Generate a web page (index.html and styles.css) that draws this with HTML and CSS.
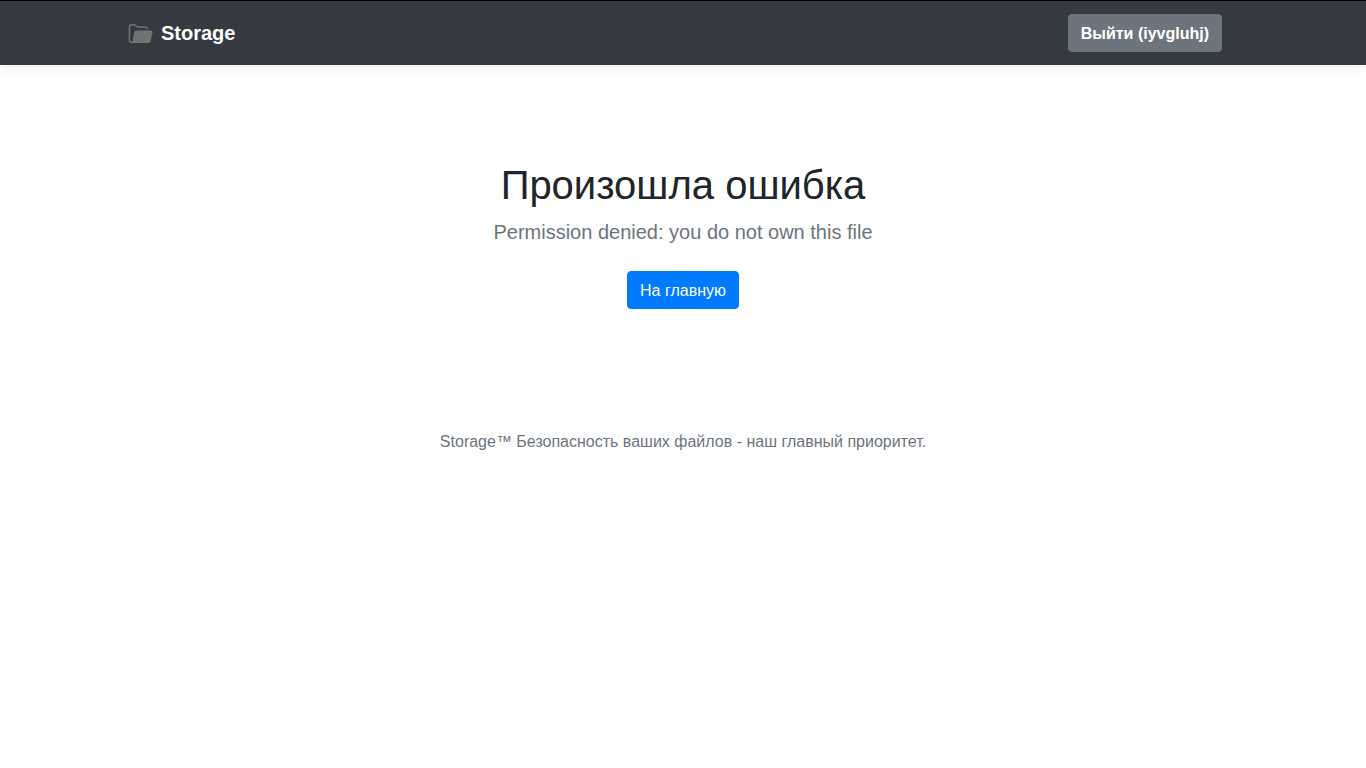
FILE: index.html
```html
<!DOCTYPE html>
<html lang="ru">
<head>
<meta charset="utf-8">
<meta name="viewport" content="width=device-width, initial-scale=1">
<title>Storage</title>
<link rel="stylesheet" href="styles.css">
</head>
<body>
<header class="navbar">
  <div class="container navbar-inner">
    <a class="brand" href="#">
      <svg class="brand-icon" viewBox="0 0 25 24" aria-hidden="true">
        <path d="M5 21.5H3.8Q1.4 21.5 1.4 19.1V6.1Q1.4 3.7 3.8 3.7H6C8.2 3.7 8.2 6.1 10.4 6.1H17Q19.2 6.1 19.2 8" fill="none" stroke="#737373" stroke-width="1.5" stroke-linecap="round"/>
        <path d="M8.6 9.4H22.4Q24.9 9.4 24.4 11.8L22.8 19.4Q22.2 22 19.6 22H4.4L6.2 11.6Q6.6 9.4 8.6 9.4Z" fill="#737373"/>
      </svg>
      <strong>Storage</strong>
    </a>
    <form class="logout">
      <button class="btn btn-secondary" type="button">Выйти (iyvgluhj)</button>
    </form>
  </div>
</header>
<main class="message">
  <h1 class="title">Произошла ошибка</h1>
  <p class="lead">Permission denied: you do not own this file</p>
  <a class="btn btn-primary" href="#">На главную</a>
</main>
<footer class="footer">
  <p class="footer-text">Storage™ Безопасность ваших файлов - наш главный приоритет.</p>
</footer>
</body>
</html>
```
FILE: styles.css
```css
* {
  box-sizing: border-box;
}

body {
  margin: 0;
  background: #fff;
  color: #212529;
  font-family: "Liberation Sans", Arial, sans-serif;
  font-size: 16px;
  line-height: 24px;
}

.navbar {
  border-top: 1px solid #000;
  background: #343a40;
  box-shadow: 0 4px 12px rgba(0, 0, 0, 0.05);
}

.container {
  width: 100%;
  max-width: 1140px;
  margin: 0 auto;
  padding: 0 15px;
}

.navbar-inner {
  display: flex;
  align-items: center;
  justify-content: space-between;
  min-height: 64px;
}

.brand {
  display: flex;
  align-items: center;
  gap: 8px;
  color: #fff;
  font-size: 20px;
  line-height: 30px;
  text-decoration: none;
}

.brand-icon {
  width: 25px;
  height: 24px;
}

.logout {
  margin: 0 16px 0 0;
}

.btn {
  display: inline-block;
  padding: 7px 12px 5px;
  border: 1px solid transparent;
  border-radius: 4px;
  color: #fff;
  font: inherit;
  text-align: center;
  text-decoration: none;
  cursor: pointer;
}

.btn-secondary {
  border-color: #6c757d;
  background: #6c757d;
  font-weight: 700;
}

.btn-primary {
  margin: 8px 0;
  border-color: #007bff;
  background: #007bff;
}

.message {
  display: flex;
  flex-direction: column;
  align-items: center;
  padding: 96px 15px;
  text-align: center;
}

.title {
  margin: 0 0 8px;
  font-size: 40px;
  font-weight: 500;
  line-height: 48px;
}

.lead {
  margin: 0 0 16px;
  color: #6c757d;
  font-size: 20px;
  line-height: 30px;
}

.footer {
  padding: 17px 15px;
  color: #6c757d;
  text-align: center;
}

.footer-text {
  margin: 0;
}
```
